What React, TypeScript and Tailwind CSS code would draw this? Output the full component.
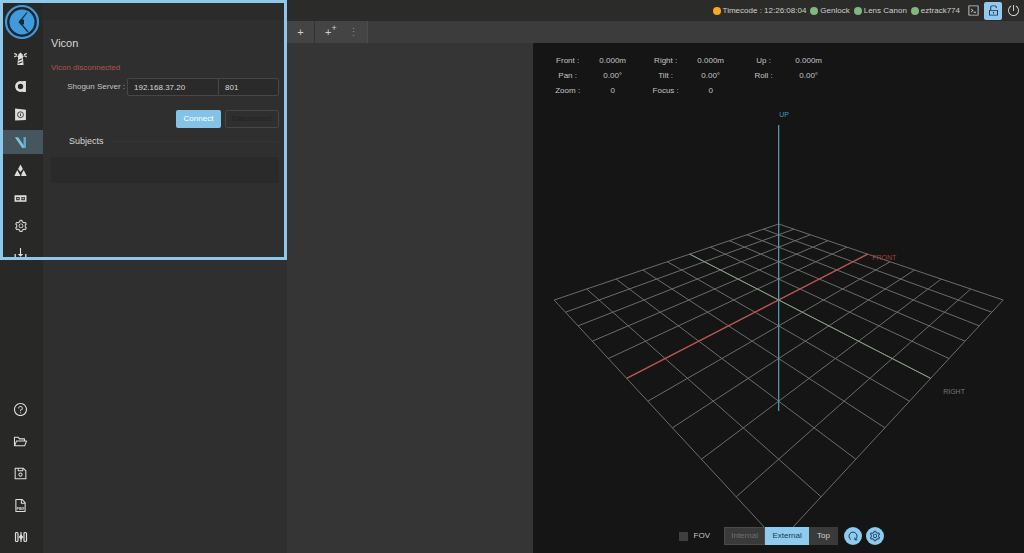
import type { ReactNode } from "react"
import {
  AiOutlineCode,
  AiOutlineFile,
  AiOutlineFolderOpen,
  AiOutlinePoweroff,
  AiOutlineQuestionCircle,
  AiOutlineSave,
  AiOutlineSetting,
  AiOutlineUnlock,
} from "react-icons/ai"

const CENTER_X = 778.5
const HORIZON = 78.7

// Perspective projection of a floor point, front and right go from -5 to 5
function project(front: number, right: number) {
  const depth = (right - front) / 10
  const side = (front + right) / 10
  const w = 1 - 0.523 * depth
  return { x: CENTER_X + (224.5 * side) / w, y: HORIZON + 221.3 / w }
}

function FloorLine({ from, to, color, width = 1 }: { from: number[]; to: number[]; color: string; width?: number }) {
  const a = project(from[0], from[1])
  const b = project(to[0], to[1])
  return <line x1={a.x} y1={a.y} x2={b.x} y2={b.y} stroke={color} strokeWidth={width} />
}

function Scene() {
  const steps = [-5, -4, -3, -2, -1, 0, 1, 2, 3, 4, 5]
  return (
    <svg className="absolute inset-0 h-full w-full" viewBox="533 43 491 510" aria-label="3D view">
      {steps.map((s) => (
        <g key={s}>
          {/* lines parallel to the right axis, then to the front axis */}
          <FloorLine from={[s, -5]} to={[s, 5]} color="#6c6c6c" />
          <FloorLine from={[-5, s]} to={[5, s]} color="#6c6c6c" />
        </g>
      ))}
      <FloorLine from={[0, -5]} to={[0, 5]} color="#87a083" />
      <FloorLine from={[-5, 0]} to={[5, 0]} color="#b9504f" width={1.3} />
      <line x1={CENTER_X} y1="125" x2={CENTER_X} y2="411" stroke="#4f9aa8" strokeWidth="1.3" />
      <g fontSize="7" fontFamily="Liberation Sans, sans-serif">
        <text x="779" y="117" fill="#4196bd">UP</text>
        <text x="872" y="260" fill="#a03f40">FRONT</text>
        <text x="943" y="394" fill="#767676">RIGHT</text>
      </g>
    </svg>
  )
}

function Logo() {
  return (
    <svg className="h-9 w-9" viewBox="0 0 36 36">
      <circle cx="18" cy="18" r="16" fill="#20262b" stroke="#3f9ade" strokeWidth="2.200" />
      <circle cx="18" cy="18" r="12.500" fill="#3f9ade" />
      <path d="M23 8.500 15.500 18l8.500 10" fill="none" stroke="#20262b" strokeWidth="1.200" />
      <path d="M14.500 18l2.500-3 3 .8v4.400l-3 .8z" fill="#20262b" />
    </svg>
  )
}

function Glyph({ children }: { children: ReactNode }) {
  return (
    <svg className="h-[13px] w-[13px]" viewBox="0 0 12 12" fill="currentColor">
      {children}
    </svg>
  )
}

const tools = [
  {
    label: "Beacon",
    icon: (
      <Glyph>
        <path d="M4 2.200 6 .4l2 1.800v1.200h.8v1.200h-.6L8.800 12H3.200l.6-7.400h-.6V3.400H4z" />
        <path d="M.2.800l2.600 1V3L.2 2zM.2 5l2.600-1V3L.2 3.800zM11.800.8l-2.600 1V3l2.600-1zM11.800 5l-2.600-1V3l2.600.8z" />
        <path d="M4.300 7.200 7.600 5.800v1L4.200 8.300zM4.100 10l3.700-1.500v1L4 11z" fill="#282827" />
      </Glyph>
    ),
  },
  {
    label: "Antilatency",
    icon: (
      <Glyph>
        <path fillRule="evenodd" d="M6 1a5 5 0 1 0 2 9.600V11h3V1H8v.4A5 5 0 0 0 6 1zm0 2.500a2.500 2.500 0 1 1 0 5 2.500 2.500 0 0 1 0-5z" />
      </Glyph>
    ),
  },
  {
    label: "Camera",
    icon: (
      <Glyph>
        <path d="M1 .5 11 1.500V11l-10 .5z" />
        <circle cx="6" cy="6.200" r="2.700" fill="none" stroke="#282827" strokeWidth=".8" />
        <path d="M6 5v2.500" stroke="#282827" strokeWidth=".8" />
      </Glyph>
    ),
  },
  {
    label: "Vicon",
    active: true,
    icon: (
      <Glyph>
        <path d="M.8 1.200h3l5.400 7.500V11H7.600z" fill="#79c3df" />
        <path d="M8.800 1h2.200v10H8.800z" fill="#69a9c9" />
      </Glyph>
    ),
  },
  {
    label: "OptiTrack",
    icon: (
      <Glyph>
        <path d="M6 .5 8.200 4.600 6 7.400 3.800 4.600zM3 5.500l3 5.500H.3zM9 5.500l2.700 5.500H6.600L7.200 8.500z" />
      </Glyph>
    ),
  },
  {
    label: "Stereo camera",
    icon: (
      <Glyph>
        <path fillRule="evenodd" d="M.5 3h11v6H.5zm1.500 1.500v3h3.200v-3zm4.800 0v3H10v-3z" />
        <path d="M3 5.400h1.200v1.200H3zM7.800 5.400H9v1.200H7.800z" />
      </Glyph>
    ),
  },
  { label: "Settings", icon: <AiOutlineSetting className="h-3.5 w-3.5" /> },
  {
    label: "Import",
    icon: (
      <Glyph>
        <path d="M5.500 0h1v5.500H8.500L6 8 3.500 5.500h2zM.5 5.500h1.200v4h8.600v-4h1.200V11H.5z" />
      </Glyph>
    ),
  },
]

const fileActions = [
  { label: "Help", icon: <AiOutlineQuestionCircle /> },
  { label: "Open", icon: <AiOutlineFolderOpen /> },
  { label: "Save", icon: <AiOutlineSave /> },
  {
    label: "Export FBX",
    icon: (
      <span className="relative">
        <AiOutlineFile />
        <span className="absolute inset-x-0 bottom-0.5 text-center text-[4px] leading-1 font-bold">FBX</span>
      </span>
    ),
  },
  {
    label: "Calibration",
    icon: (
      <svg className="h-3.5 w-3.5" viewBox="0 0 14 14" fill="none" stroke="currentColor" strokeWidth="1.200">
        <rect x="1.500" y="2.500" width="2.500" height="9" rx="1" />
        <rect x="10" y="2.500" width="2.500" height="9" rx="1" />
        <path d="M7 2v10" />
        <path d="M7 5.200 8.500 7 7 8.800 5.500 7z" fill="currentColor" />
      </svg>
    ),
  },
]

const statuses = [
  { label: "Timecode : 12:26:08:04", dot: "bg-[#fba81c]" },
  { label: "Genlock", dot: "bg-[#7fb77e]" },
  { label: "Lens Canon", dot: "bg-[#7fb77e]" },
  { label: "eztrack774", dot: "bg-[#7fb77e]" },
]

const readings = [
  [["Front :", "0.000m"], ["Right :", "0.000m"], ["Up :", "0.000m"]],
  [["Pan :", "0.00°"], ["Tilt :", "0.00°"], ["Roll :", "0.00°"]],
  [["Zoom :", "0"], ["Focus :", "0"]],
]

function Sidebar() {
  return (
    <aside className="flex w-[43px] shrink-0 flex-col bg-[#282827] text-[#dedede]">
      <nav className="flex h-[257px] flex-col gap-1 overflow-hidden">
        <a href="#home" aria-label="Home" className="flex h-[42px] shrink-0 items-end justify-center pb-0.5">
          <Logo />
        </a>
        {tools.map((tool) => (
          <button
            key={tool.label}
            aria-label={tool.label}
            className={`flex h-6 w-full shrink-0 items-center justify-center pr-0.5 ${tool.active ? "bg-[#46565f]" : ""}`}
          >
            {tool.icon}
          </button>
        ))}
      </nav>
      <div className="mt-auto flex flex-col">
        {fileActions.map((action) => (
          <button
            key={action.label}
            aria-label={action.label}
            className="flex h-8 items-center justify-center pr-0.5 text-[15px]"
          >
            {action.icon}
          </button>
        ))}
      </div>
    </aside>
  )
}

function ViconPanel() {
  return (
    <section className="w-[244px] shrink-0 bg-[#2f2f2f] text-[#c4c4c4]">
      <div className="h-5 bg-[#2b2b2a]" />
      <div className="px-2 pt-4">
        <h1 className="text-[11px] leading-[14px] text-[#d8d8d8]">Vicon</h1>
        <p className="mt-3 text-[8px] leading-[12px] text-[#b5504f]">Vicon disconnected</p>
        <div className="mt-1 flex items-center justify-end">
          <label htmlFor="server" className="pr-0.5 text-[8px]">
            Shogun Server :
          </label>
          <input
            id="server"
            defaultValue="192.168.37.20"
            className="h-[18px] w-[92px] rounded-l-xs border border-[#474747] bg-[#2a2a2a] px-1.5 text-[8px] text-[#d8d8d8]"
          />
          <input
            aria-label="Port"
            defaultValue="801"
            className="-ml-px h-[18px] w-[61px] rounded-r-xs border border-[#474747] bg-[#2a2a2a] px-1.5 text-[8px] text-[#d8d8d8]"
          />
        </div>
        <div className="mt-3.5 flex justify-end gap-1">
          <button className="h-[18px] w-[45px] rounded-xs bg-[#83c3e8] text-[8px] text-white">Connect</button>
          <button disabled className="h-[18px] w-[54px] rounded-xs border border-[#474747] text-[8px] text-[#1f1f1f]">
            Disconnect
          </button>
        </div>
        <div className="mt-[7px] flex items-center gap-2 pl-[18px]">
          <h2 className="text-[9px] leading-[12px] font-medium text-[#d8d8d8]">Subjects</h2>
          <div className="h-px flex-1 bg-[#353535]" />
        </div>
        <div className="mt-2.5 h-[26px] bg-[#2a2a2a]" />
      </div>
    </section>
  )
}

function StatusBar() {
  return (
    <header className="flex h-[21px] items-center justify-end gap-1 bg-[#2b2b2a] pr-1 text-[8px] text-[#cecece]">
      {statuses.map((status) => (
        <span key={status.label} className="flex items-center gap-0.5">
          <span className={`h-2 w-2 rounded-full ${status.dot}`} />
          {status.label}
        </span>
      ))}
      <button aria-label="Console" className="ml-0.5 flex h-[18px] w-[14px] items-center justify-center text-[13px]">
        <AiOutlineCode />
      </button>
      <button
        aria-label="Unlock"
        className="flex h-[18px] w-[18px] items-center justify-center rounded-xs bg-[#92c9ec] text-[13px] text-[#16304a]"
      >
        <AiOutlineUnlock />
      </button>
      <button aria-label="Power" className="flex h-[18px] w-[14px] items-center justify-center text-[13px]">
        <AiOutlinePoweroff />
      </button>
    </header>
  )
}

function Tabs() {
  return (
    <div className="flex h-[22px] bg-[#3c3c3c] text-[#d0d0d0]">
      <button className="w-[28px] border-r border-[#303030] bg-[#444444] text-[11px]">+</button>
      <div className="flex w-[53px] items-center justify-between border-r border-[#4c4c4c] bg-[#444444] pr-2 pl-2.5 text-[11px]">
        <button>
          +<sup className="text-[9px]">+</sup>
        </button>
        <button className="text-[#8a8a8a]">⋮</button>
      </div>
    </div>
  )
}

function Viewport() {
  return (
    <main className="relative flex flex-2 flex-col justify-between bg-[#151515] text-[8px] text-[#c4c4c4]">
      <Scene />
      <table className="relative mt-2.5 ml-3 self-start text-center">
        <tbody>
          {readings.map((row) => (
            <tr key={row[0][0]} className="h-[15px]">
              {row.map(([label, value]) => [
                <th key={label} scope="row" className="w-[46px] p-0 font-normal">
                  {label}
                </th>,
                <td key={`${label}-value`} className="w-[52px] p-0 pr-2">
                  {value}
                </td>,
              ])}
            </tr>
          ))}
        </tbody>
      </table>
      <div className="relative mb-2 flex items-center justify-center pl-1.5">
        <label className="flex items-center gap-1.5">
          <input type="checkbox" className="h-[9px] w-[9px] appearance-none bg-[#3f3f3f]" />
          FOV
        </label>
        <div className="ml-3.5 flex h-[18px] bg-[#3a3a3a]">
          <button disabled className="w-[41px] border border-[#4a4a4a] text-[#707070]">
            Internal
          </button>
          <button className="w-[44px] bg-[#8fcbef] text-[#1b3a55]">External</button>
          <button className="w-[29px] text-[#d0d0d0]">Top</button>
        </div>
        <button
          aria-label="Reset view"
          className="ml-1.5 flex h-[18px] w-[18px] items-center justify-center rounded-full bg-[#8fcbef] text-[#1b3a55]"
        >
          <svg className="h-3 w-3" viewBox="0 0 12 12" fill="none" stroke="currentColor">
            <path d="M4 9.600A4 4 0 1 1 8.200 9.500M10.300 9.800H7.900V7.500" />
          </svg>
        </button>
        <button
          aria-label="View settings"
          className="ml-1 flex h-[18px] w-[18px] items-center justify-center rounded-full bg-[#8fcbef] text-[12px] text-[#1b3a55]"
        >
          <AiOutlineSetting />
        </button>
      </div>
    </main>
  )
}

export default function App() {
  return (
    <div className="relative flex min-h-screen w-full bg-[#282827] font-['Liberation_Sans',Arial,sans-serif]">
      <Sidebar />
      <ViconPanel />
      <div className="flex min-w-0 flex-1 flex-col">
        <StatusBar />
        <Tabs />
        <div className="flex flex-1">
          <section className="flex-1 bg-[#353535]" />
          <Viewport />
        </div>
      </div>
      {/* highlight around the open tool */}
      <div className="pointer-events-none absolute top-0 left-0 h-[260px] w-[287px] border-3 border-[#8ec9ea]" />
    </div>
  )
}
